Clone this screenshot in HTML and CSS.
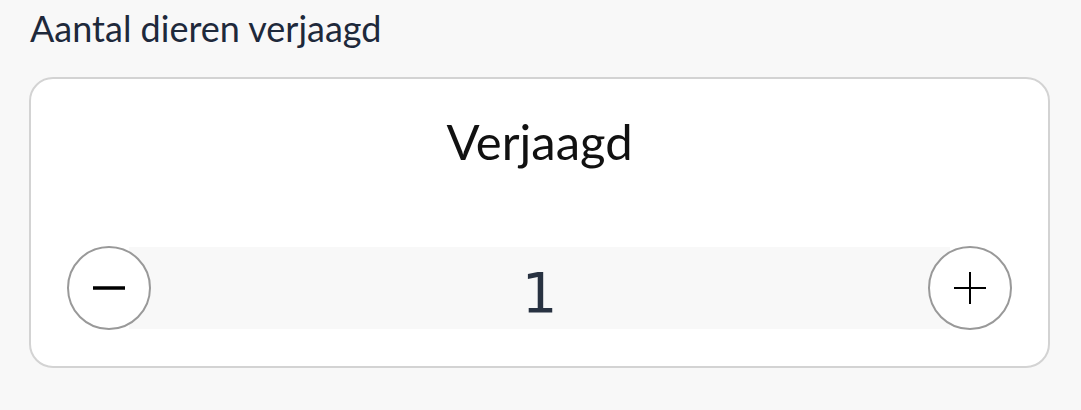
FILE: index.html
```html
<!DOCTYPE html>
<html lang="nl">
<head>
<meta charset="utf-8">
<title>Aantal dieren verjaagd</title>
<link rel="stylesheet" href="styles.css">
</head>
<body>
<div class="field">
  <div class="label">Aantal dieren verjaagd</div>
  <div class="card">
    <div class="card-title">Verjaagd</div>
    <div class="stepper">
      <button class="step-btn" type="button" aria-label="Minder">
        <svg width="34" height="34" viewBox="0 0 34 34"><line x1="1" y1="17" x2="33" y2="17" stroke="#000" stroke-width="3.5"/></svg>
      </button>
      <div class="value">1</div>
      <button class="step-btn" type="button" aria-label="Meer">
        <svg width="34" height="34" viewBox="0 0 34 34"><line x1="1" y1="17" x2="33" y2="17" stroke="#000" stroke-width="2"/><line x1="17" y1="1" x2="17" y2="33" stroke="#000" stroke-width="2"/></svg>
      </button>
    </div>
  </div>
</div>
</body>
</html>
```
FILE: styles.css
```css
html, body {
  margin: 0;
  padding: 0;
  background: #f8f8f8;
}
body {
  font-family: Lato, "Liberation Sans", sans-serif;
}
.field {
  padding: 6px 31px 0 29px;
}
.label {
  font-size: 36px;
  line-height: 44px;
  color: #1e293b;
  padding-left: 1px;
}
.card {
  margin-top: 27px;
  background: #fff;
  border: 2px solid #d3d3d3;
  border-radius: 24px;
  padding: 32px 36px 36px 36px;
  display: flex;
  flex-direction: column;
}
.card-title {
  font-size: 49px;
  line-height: 60px;
  text-align: center;
  color: #111;
}
.stepper {
  margin-top: 75px;
  display: flex;
  align-items: center;
  height: 84px;
}
.step-btn {
  position: relative;
  z-index: 1;
  flex: 0 0 auto;
  width: 84px;
  height: 84px;
  box-sizing: border-box;
  border: 2px solid #999;
  border-radius: 50%;
  background: #fff;
  padding: 0;
  display: flex;
  align-items: center;
  justify-content: center;
  cursor: pointer;
}
.value {
  flex: 1 1 auto;
  margin: 0 -22px;
  height: 82px;
  box-sizing: border-box;
  padding-top: 8px;
  background: #f8f8f8;
  display: flex;
  align-items: center;
  justify-content: center;
  font-family: "DejaVu Sans", sans-serif;
  font-weight: 400;
  font-size: 56px;
  color: #283241;
}
```
